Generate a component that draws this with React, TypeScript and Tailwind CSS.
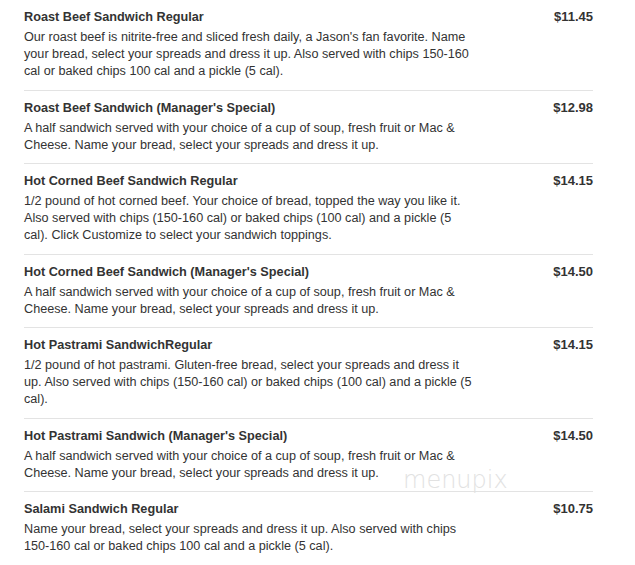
const items = [
  {
    name: "Roast Beef Sandwich Regular",
    price: "$11.45",
    desc: "Our roast beef is nitrite-free and sliced fresh daily, a Jason's fan favorite. Name your bread, select your spreads and dress it up. Also served with chips 150-160 cal or baked chips 100 cal and a pickle (5 cal).",
  },
  {
    name: "Roast Beef Sandwich (Manager's Special)",
    price: "$12.98",
    desc: "A half sandwich served with your choice of a cup of soup, fresh fruit or Mac & Cheese. Name your bread, select your spreads and dress it up.",
  },
  {
    name: "Hot Corned Beef Sandwich Regular",
    price: "$14.15",
    desc: "1/2 pound of hot corned beef. Your choice of bread, topped the way you like it. Also served with chips (150-160 cal) or baked chips (100 cal) and a pickle (5 cal). Click Customize to select your sandwich toppings.",
  },
  {
    name: "Hot Corned Beef Sandwich (Manager's Special)",
    price: "$14.50",
    desc: "A half sandwich served with your choice of a cup of soup, fresh fruit or Mac & Cheese. Name your bread, select your spreads and dress it up.",
  },
  {
    name: "Hot Pastrami SandwichRegular",
    price: "$14.15",
    desc: "1/2 pound of hot pastrami. Gluten-free bread, select your spreads and dress it up. Also served with chips (150-160 cal) or baked chips (100 cal) and a pickle (5 cal).",
  },
  {
    name: "Hot Pastrami Sandwich (Manager's Special)",
    price: "$14.50",
    desc: "A half sandwich served with your choice of a cup of soup, fresh fruit or Mac & Cheese. Name your bread, select your spreads and dress it up.",
  },
  {
    name: "Salami Sandwich Regular",
    price: "$10.75",
    desc: "Name your bread, select your spreads and dress it up. Also served with chips 150-160 cal or baked chips 100 cal and a pickle (5 cal).",
  },
];

const MenuItem = ({ item, last }: { item: (typeof items)[number]; last: boolean }) => {
  return (
    <div className={`pt-[8px] pb-[9.5px] ${last ? "" : "border-b border-[#e3e3e3]"}`}>
      <div className="flex justify-between items-start">
        <p className="text-[12.7px] font-bold leading-[18px] text-[#333]">{item.name}</p>
        <p className="text-[13px] font-bold leading-[18px] text-[#333]">{item.price}</p>
      </div>
      <p className="mt-[3px] w-[450px] text-[12.65px] leading-[17px] text-[#333]">{item.desc}</p>
    </div>
  );
};

export default function App() {
  return (
    <div
      className="relative w-[635px] h-[565px] bg-white overflow-hidden"
      style={{ fontFamily: '"Liberation Sans", Arial, sans-serif' }}
    >
      <div className="ml-[24px] w-[569px]">
        {items.map((item, i) => (
          <MenuItem key={i} item={item} last={i === items.length - 1} />
        ))}
      </div>
      <div
        className="absolute left-[403px] top-[468px] text-[24px] leading-none text-[#e2e2e2]"
        style={{ fontFamily: '"DejaVu Sans", sans-serif', fontWeight: 200 }}
      >
        menupix
      </div>
    </div>
  );
}
